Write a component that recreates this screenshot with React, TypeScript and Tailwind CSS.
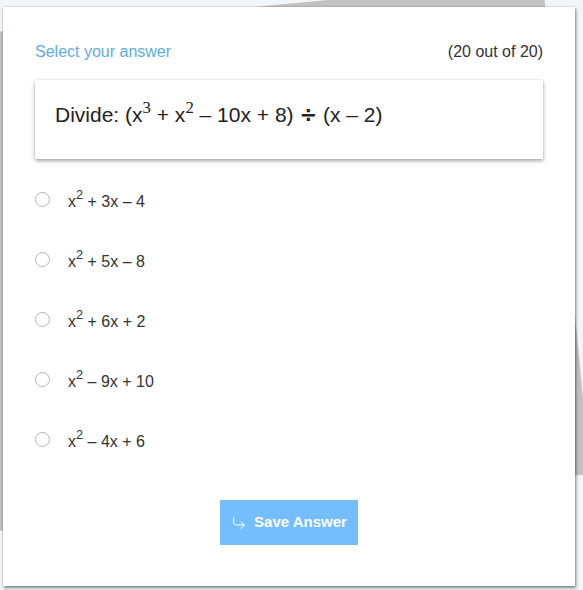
import { CornerDownRight } from "lucide-react";

const options = [
  { rest: " + 3x – 4" },
  { rest: " + 5x – 8" },
  { rest: " + 6x + 2" },
  { rest: " – 9x + 10" },
  { rest: " – 4x + 6" },
];

export default function App() {
  return (
    <div
      className="relative h-[590px] w-full overflow-hidden bg-[#f3f6f9]"
      style={{ fontFamily: "'Liberation Sans', Arial, sans-serif" }}
    >
      {/* tilted sheet behind the card */}
      <div className="absolute left-[-76px] top-[9px] h-[497px] w-[644px] -rotate-[5.5deg] bg-[#c2c2c2]" />

      <div className="relative ml-[3px] pt-[7px]">
        <div className="flex h-[579px] w-[572px] flex-col bg-white px-8 pt-[33px] shadow-[1px_2px_3px_rgba(0,0,0,0.45),0_0_2px_rgba(0,0,0,0.2)]">
          {/* header */}
          <div className="flex h-6 items-center justify-between text-[16px] leading-6">
            <span className="text-[#5dade2]">Select your answer</span>
            <span className="text-[#333]">(20 out of 20)</span>
          </div>

          {/* question */}
          <div className="mt-[16px] h-[79px] bg-white pl-5 pt-5 shadow-[0_2px_4px_rgba(0,0,0,0.35),0_0_1px_rgba(0,0,0,0.2)]">
            <p className="text-[21px] leading-[29px] text-[#222]">
              Divide: (x
              <sup className="-top-[0.55em] text-[80%]" style={{ fontFamily: "'Liberation Serif', serif" }}>
                3
              </sup>{" "}
              + x
              <sup className="-top-[0.55em] text-[80%]" style={{ fontFamily: "'Liberation Serif', serif" }}>
                2
              </sup>{" "}
              – 10x + 8){" "}
              <span className="font-bold" style={{ fontFamily: "'DejaVu Sans', sans-serif" }}>
                ÷
              </span>{" "}
              (x – 2)
            </p>
          </div>

          {/* options */}
          <div className="mt-[10px] flex flex-col">
            {options.map((o, i) => (
              <label key={i} className="flex h-[60px] items-center">
                <span className="h-[15px] w-[15px] shrink-0 rounded-full border border-[#b5b5b5] bg-white" />
                <span className="ml-[18px] mt-[6px] text-[16px] leading-6 text-[#333]">
                  x<sup className="-top-[0.6em] text-[80%]">2</sup>
                  {o.rest}
                </span>
              </label>
            ))}
          </div>

          {/* button */}
          <div className="mt-[31px] flex justify-center">
            <button className="flex h-[45px] w-[138px] items-center justify-center gap-[7px] bg-[#74befe] text-[15px] font-bold text-white">
              <CornerDownRight className="h-4 w-4" strokeWidth={1.5} />
              Save Answer
            </button>
          </div>
        </div>
      </div>
    </div>
  );
}
